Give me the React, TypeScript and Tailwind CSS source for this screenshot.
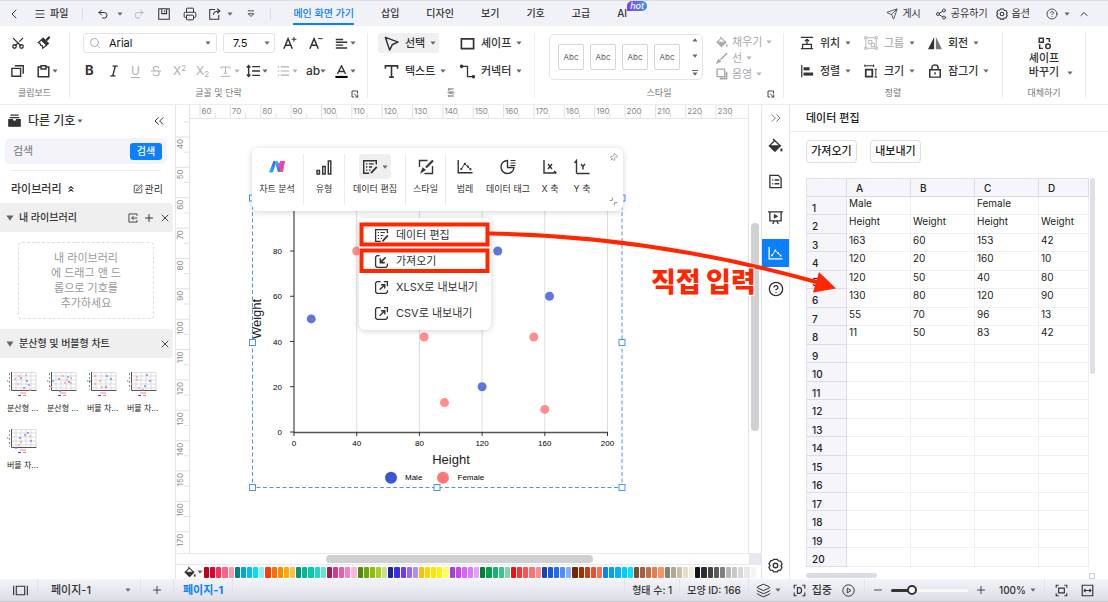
import React, { useState } from "react";
import { Search, Scissors, Printer, Undo2, Redo2, Send, Share2, CircleHelp, ChevronLeft, ChevronUp, ChevronsLeft, ChevronsRight, ChevronsUp, Layers, Plus, X, Minus, Menu, SquarePen, Pin } from "lucide-react";

type IconProps = { className?: string; children: React.ReactNode; sw?: number };

function Icon({ className = "size-4", children, sw = 1.4 }: IconProps) {
  return (
    <svg viewBox="0 0 16 16" fill="none" stroke="currentColor" strokeWidth={sw} className={`shrink-0 ${className}`} aria-hidden="true">
      {children}
    </svg>
  );
}

function Caret({ className = "" }: { className?: string }) {
  return (
    <svg viewBox="0 0 6 4" className={`h-1 w-[6px] shrink-0 fill-[#666] ${className}`} aria-hidden="true">
      <path d="M.5.5h5L3 3.7z" />
    </svg>
  );
}

function SectionCaret() {
  return (
    <svg viewBox="0 0 8 6" className="h-[6px] w-[8px] shrink-0 fill-[#666]" aria-hidden="true">
      <path d="M.5.5h7L4 5.700z" />
    </svg>
  );
}

const BucketIcon = ({ className }: { className?: string }) => (
  <Icon className={className}>
    <path d="M5.5 1l2 2M7 2.6L13 8.4 7.4 14 1.6 8.4z" />
    <path d="M2 8.4h10.8L7.4 13.8z" fill="currentColor" />
    <path d="M14.3 11.2v3" strokeWidth="2.2" />
  </Icon>
);

const EditDataIcon = ({ className }: { className?: string }) => (
  <Icon className={className}>
    <path d="M14.3 5.500V1.700H1.700v12.600h5.500" />
    <path d="M4 4.800h1.300M4 8h1.300M4 11.200h1.300M7 4.800h4.600M7 8h3M7 11.200h1.500" strokeWidth="1.300" />
    <path d="M9 14.200l5.800-6.400" strokeWidth="1.800" />
  </Icon>
);

const ImportIcon = ({ className }: { className?: string }) => (
  <Icon className={className}>
    <path d="M6 1.7H3.2L1.7 3.2v9.6l1.5 1.5h9.6l1.5-1.5V10" />
    <path d="M12.5 3.5L7 9M6.8 4.5V9.2h4.7" strokeWidth="1.7" />
  </Icon>
);

const ExportIcon = ({ className }: { className?: string }) => (
  <Icon className={className}>
    <path d="M7 1.700H3.200L1.700 3.200v9.600l1.500 1.500h9.600l1.500-1.500V11M10.500 1.700h3.800v5" />
    <path d="M6 10.500l5-5M7.500 5H11.500V9" strokeWidth="1.500" />
  </Icon>
);

const LegendIcon = ({ className }: { className?: string }) => (
  <Icon className={className}>
    <path d="M1.2 1v12.8H15.5" />
    <path d="M4.3 10l3.5-5.2 3 3.2 2.7 2" strokeWidth="1" />
    <path d="M3.4 10h1.8M6.9 4.8h1.8M10 7.5h1.8M12.6 10.2h1.8" strokeWidth="2" />
  </Icon>
);

const GearIcon = ({ className }: { className?: string }) => (
  <Icon className={className}>
    <path d="M5 2.6L6 1.4h4l1 1.6 2.4.2 1.6 3.4-1.2 1.7 1.2 1.7-1.8 3.2-2.3.1L10 14.8H6l-1-1.6-2.4-.2L1 9.8 2.2 8 1 6.2l1.8-3.2z" />
    <circle cx="8" cy="8" r="2.4" />
  </Icon>
);

const LauncherIcon = () => (
  <Icon className="size-2" sw={1.8}>
    <path d="M6 14H2V2h11v5M6 7l7 7M13.5 9v5.2H8.5" />
  </Icon>
);

const TABS = ["메인 화면 가기", "삽입", "디자인", "보기", "기호", "고급", "AI"];

function TitleBar() {
  const [tab, setTab] = useState(0);
  return (
    <header className="flex h-[26px] shrink-0 items-center border-t border-[#dcdde4] bg-[#f1f2f8] pl-[6px] pr-[18px] text-[10px]">
      <button aria-label="뒤로"><ChevronLeft className="size-4" strokeWidth={1.5} /></button>
      <button className="ml-3 flex items-center gap-1 font-medium"><Menu className="size-3" strokeWidth={1.8} />파일</button>
      <span className="ml-[14px] h-3 w-px bg-[#dcdde4]" />
      <button aria-label="실행 취소" className="ml-[14px] flex items-center gap-2"><Undo2 className="size-3" /><Caret /></button>
      <button aria-label="다시 실행" className="ml-[10px] text-[#b5b5bb]"><Redo2 className="size-3" /></button>
      <button aria-label="저장" className="ml-[13px]">
        <Icon className="size-3"><path d="M1 1h14v14H1zM5 1v6.5h6.5V1M9 3v2.5" /></Icon>
      </button>
      <button aria-label="인쇄" className="ml-[13px]"><Printer className="size-[14px]" strokeWidth={1.7} /></button>
      <button aria-label="내보내기" className="ml-3 flex items-center gap-[6px]">
        <Icon className="size-3"><path d="M8 2H1v13h12V9M6 9c0-3 3-5 8-5M11 1l3.5 3L11 7" /></Icon>
        <Caret />
      </button>
      <button aria-label="더 보기" className="ml-[13px]">
        <Icon className="size-[10px]"><path d="M3 3h10M3.5 7.5h9L8 12z" /></Icon>
      </button>
      <span className="ml-[14px] h-3 w-px bg-[#dcdde4]" />
      <nav className="ml-[22px] flex h-full gap-[27px] font-medium">
        {TABS.map((t, i) => (
          <button key={t} onClick={() => setTab(i)} className={`relative flex h-[24px] items-center border-b-2 pt-[2px] ${tab === i ? "border-[#0a80ff] text-[#0a80ff]" : "border-transparent"}`}>
            {t}
            {t === "AI" && <span className="absolute left-[10px] top-0 rounded-[5px] rounded-bl-none bg-gradient-to-r from-[#7a3cf5] to-[#2f8bff] px-[3px] text-[9px] italic leading-[10px] text-white">hot</span>}
          </button>
        ))}
      </nav>
      <div className="ml-auto flex items-center">
        <button className="flex items-center gap-1"><Send className="size-3" strokeWidth={1.6} />게시</button>
        <button className="ml-[14px] flex items-center gap-1"><Share2 className="size-3" strokeWidth={1.8} />공유하기</button>
        <button className="ml-2 flex items-center gap-1"><GearIcon className="size-3" />옵션</button>
        <button aria-label="도움말" className="ml-4 flex items-center gap-[6px]"><CircleHelp className="size-3" strokeWidth={1.7} /><Caret /></button>
        <button aria-label="접기" className="ml-2"><ChevronUp className="size-3" strokeWidth={2} /></button>
      </div>
    </header>
  );
}

function Group({ label, className = "", launcher, children }: { label: string; className?: string; launcher?: boolean; children: React.ReactNode }) {
  return (
    <section aria-label={label} className={`relative flex h-[65px] shrink-0 flex-col justify-between border-r border-[#ececef] ${className}`}>
      {children}
      <p className="text-center text-[9px] leading-[10px] text-[#777]">{label}</p>
      {launcher && <button aria-label={`${label} 설정`} className="absolute bottom-0 right-2"><LauncherIcon /></button>}
    </section>
  );
}

function ToolButton({ icon, label, className = "" }: { icon: React.ReactNode; label: string; className?: string }) {
  return (
    <button className={`flex h-5 items-center gap-[6px] text-[11px] ${className}`}>
      {icon}
      <span className="flex items-center gap-[5px]">{label}<Caret /></span>
    </button>
  );
}

const alignIcons = {
  position: <Icon className="size-[14px]"><path d="M1 1.500h14M1 14.500h14M3 14V9.500h10V14M8 10V4M5.500 6L8 3.800 10.500 6" /></Icon>,
  align: <Icon className="size-[14px]"><path d="M2 1v14" /><path d="M4 5.500h7" strokeWidth="3.500" /><path d="M4 11.500h11" strokeWidth="3.500" /></Icon>,
  group: <Icon className="size-[14px]"><path d="M3 2h10M3 14h10M2 3v10M14 3v10" strokeWidth="1" /><path d="M.8.8h2.400v2.400H.8zM12.800.8h2.400v2.400h-2.400zM.8 12.800h2.400v2.400H.8zM12.800 12.800h2.400v2.400h-2.400zM5 5h4v4H5zM8 8h4v4H8z" strokeWidth="1" /></Icon>,
  size: <Icon className="size-[14px]"><path d="M1 2h10M1 .5v3M11 .5v3" strokeWidth="1.200" /><path d="M2 6.500h7.500v8H2z" strokeWidth="2" /><path d="M13.500 6v9M12 6h3M12 15h3" strokeWidth="1.100" /></Icon>,
  rotate: <Icon className="size-[14px]" sw={0}><path d="M7 1v14H0z" fill="#333" /><path d="M9 1v14h7z" fill="#777" /></Icon>,
  lock: <Icon className="size-[14px]" sw={1.7}><path d="M2 6.500h12v8.500H2zM4.500 6.500V4c0-4 7-4 7 0v2.500M8 9.500v2.500" /></Icon>,
};

function Ribbon() {
  const [font, setFont] = useState("Arial");
  return (
    <div className="flex h-[79px] shrink-0 items-start overflow-hidden border-b border-[#ececef] bg-white pt-[7px]">
      <Group label="클립보드" className="w-[70px]">
        <div className="grid grid-cols-[26px_1fr] gap-y-2 pl-[11px]">
          <button aria-label="잘라내기" className="flex h-5 items-center"><Scissors className="size-[14px] -rotate-90" strokeWidth={2.2} /></button>
          <button aria-label="서식 복사" className="flex h-5 items-center">
            <Icon className="size-[14px]"><path d="M10.500 5L14.500 1" strokeWidth="2.500" /><path d="M7 2.500l6 6-2 2-6-6z" fill="currentColor" /><path d="M5 4.500L1.500 7.500l2 1 .5 2 2 .5.5 3L11 10.500" /></Icon>
          </button>
          <button aria-label="복사" className="flex h-5 items-center">
            <Icon className="size-[14px]" sw={1.6}><path d="M1 5h10v9H1z" /><path d="M4.500 2H14v9" /></Icon>
          </button>
          <button aria-label="붙여넣기" className="flex h-5 items-center gap-[2px]">
            <Icon className="size-[13px]" sw={1.8}><path d="M5 2.500H1.500v12h13v-12H11M5 1h6v4H5z" /></Icon><Caret />
          </button>
        </div>
      </Group>
      <Group label="글꼴 및 단락" className="w-[298px]" launcher>
        <div className="flex flex-col gap-2 pl-[13px]">
          <div className="flex h-5 items-center">
            <label className="flex h-5 w-[134px] items-center rounded-[3px] border border-[#e2e2e6] px-[5px]">
              <Search className="size-3 text-[#999]" strokeWidth={1.6} />
              <input aria-label="글꼴" value={font} onChange={(e) => setFont(e.target.value)} className="ml-2 min-w-0 flex-1 bg-transparent text-[11px] text-[#111] outline-none" />
              <Caret />
            </label>
            <label className="ml-[6px] flex h-5 w-[52px] items-center rounded-[3px] border border-[#e2e2e6] pl-[9px] pr-1">
              <select aria-label="글꼴 크기" className="min-w-0 flex-1 appearance-none bg-transparent text-[11px] text-[#111] outline-none"><option>7.5</option></select>
              <Caret />
            </label>
            <button aria-label="글꼴 크게" className="ml-2"><Icon className="size-[14px]"><path d="M1 14.500L5.800 3 10.600 14.500M2.700 10.500h6.200" strokeWidth="1.700" /><path d="M12.500 1v5.500M9.800 3.700h5.500" strokeWidth="1.200" /></Icon></button>
            <button aria-label="글꼴 작게" className="ml-3"><Icon className="size-[14px]"><path d="M1 14.500L5.800 3 10.600 14.500M2.700 10.500h6.200" strokeWidth="1.700" /><path d="M10.500 3h5" strokeWidth="1.200" /></Icon></button>
            <button aria-label="맞춤" className="ml-3 flex items-center gap-[2px]"><Icon className="size-[13px]" sw={1.8}><path d="M1 3h9M1 6.500h14M1 10h9M1 13.500h14" /></Icon><Caret /></button>
          </div>
          <div className="flex h-5 items-center">
            <button aria-label="굵게" className="w-[22px] pl-[2px] text-left text-[13px] font-bold">B</button>
            <button aria-label="기울임" className="flex w-[24px] items-center pl-[3px]"><Icon className="size-3" sw={1.9}><path d="M6 1.500h7M3 14.500h7M9.700 1.500l-3.400 13" /></Icon></button>
            <button aria-label="밑줄" className="w-[21px] pl-[2px] text-left text-[12px] text-[#b0b0b0] underline underline-offset-2">U</button>
            <button aria-label="취소선" className="w-[23px] text-left text-[#b0b0b0]"><Icon className="size-3"><path d="M1 8h14M12 4.500C11 1 4.500 1 4.500 4.700 4.500 6 5.500 7 7 7.500M4 11.500c1 4 8.500 3.500 8.300-.5 0-1-.5-2-1.300-2.500" /></Icon></button>
            <button aria-label="위 첨자" className="w-[23px] text-left text-[12px] text-[#b0b0b0]">X<sup className="text-[8px]">2</sup></button>
            <button aria-label="아래 첨자" className="w-[24px] text-left text-[12px] text-[#b0b0b0]">X<sub className="text-[8px]">2</sub></button>
            <button aria-label="텍스트 효과" className="flex w-[26px] items-center gap-[3px] text-[#b0b0b0]"><Icon className="size-[11px]"><path d="M1.500 4V1.500h13V4M8 1.500v9M5.500 10.500h5M1 15h14" /></Icon><Caret className="opacity-50" /></button>
            <button aria-label="줄 간격" className="flex w-[31px] items-center gap-[2px]"><Icon className="size-[14px]" sw={1.6}><path d="M3 2v12M1 4l2-2.200L5 4M1 12l2 2.200L5 12M7 3h9M7 8h9M7 13h9" /></Icon><Caret /></button>
            <button aria-label="글머리 기호" className="flex w-[29px] items-center gap-[3px] text-[#b0b0b0]"><Icon className="size-3"><path d="M1 2.500h2M1 8h2M1 13.500h2M5 2.500h11M5 8h11M5 13.500h11" /></Icon><Caret className="opacity-50" /></button>
            <button aria-label="대소문자" className="flex w-[29px] items-center text-[12px] font-medium">ab<Caret /></button>
            <button aria-label="글꼴 색" className="flex items-center gap-[2px]"><Icon className="size-[13px]"><path d="M3 11L8 1l5 10M4.700 8h6.600" strokeWidth="1.700" /><path d="M.5 14.700h15" stroke="#000" strokeWidth="2.600" /></Icon><Caret /></button>
          </div>
        </div>
      </Group>
      <Group label="툴" className="w-[167px]">
        <div className="grid grid-cols-[82px_1fr] gap-y-2 pl-[10px] font-medium">
          <ToolButton label="선택" className="mr-auto rounded-[3px] bg-[#f0f0f2] pl-[6px] pr-[3px]" icon={<Icon className="size-[15px]" sw={1.600}><path d="M1.500 1.500L15 6.500 9 9 6 15z" strokeLinejoin="round" /></Icon>} />
          <ToolButton label="셰이프" icon={<Icon className="size-[15px]" sw={1.800}><path d="M1.500 3h13v10.500h-13z" /></Icon>} />
          <ToolButton label="텍스트" className="pl-[6px]" icon={<Icon className="size-[15px]" sw={1.700}><path d="M1.500 5V2h13v3M8 2v12M5.500 14h5" /></Icon>} />
          <ToolButton label="커넥터" icon={<Icon className="size-[15px]"><path d="M2 2.500h6v11h6" /><circle cx="1.700" cy="2.500" r="1.200" fill="currentColor" /><circle cx="14.300" cy="13.500" r="1.200" fill="currentColor" /></Icon>} />
        </div>
      </Group>
      <Group label="스타일" className="w-[249px]" launcher>
        <div className="flex pl-[14px] pt-px">
          <div className="flex h-[46px] w-[154px] items-center rounded-[5px] border border-[#e4e4e8] pl-2">
            <div className="flex gap-[6px]">
              {[0, 1, 2, 3].map((n) => (
                <button key={n} className="size-[26px] rounded-[2px] border border-[#d6d6da] text-[8px] text-[#666]">Abc</button>
              ))}
            </div>
            <div className="ml-3 flex flex-col items-center gap-3">
              <button aria-label="이전 스타일" className="flex"><Caret className="rotate-180" /></button>
              <button aria-label="다음 스타일" className="flex"><Caret /></button>
              <button aria-label="모든 스타일" className="flex border-t border-[#666] pt-px"><Caret /></button>
            </div>
          </div>
          <div className="ml-[13px] flex flex-col text-[11px] leading-4 text-[#a8a8ad]">
            <button className="flex items-center gap-1"><BucketIcon className="size-3" />채우기<Caret className="opacity-50" /></button>
            <button className="flex items-center gap-1"><Icon className="size-3"><path d="M1.500 14.500l2-4L5.500 12.500zM6 10L15 1.500" strokeWidth="2" /></Icon>선<Caret className="opacity-50" /></button>
            <button className="flex items-center gap-1"><Icon className="size-3" sw={1.800}><path d="M1.500 1.500h10v10h-10z" /><path d="M14 5v9H5" strokeWidth="2.500" /></Icon>음영<Caret className="opacity-50" /></button>
          </div>
        </div>
      </Group>
      <Group label="정렬" className="w-[219px]">
        <div className="grid grid-cols-[64px_64px_1fr] gap-y-2 pl-4 font-medium">
          <ToolButton label="위치" icon={alignIcons.position} />
          <ToolButton label="그룹" icon={alignIcons.group} className="text-[#b0b0b5]" />
          <ToolButton label="회전" icon={alignIcons.rotate} />
          <ToolButton label="정렬" icon={alignIcons.align} />
          <ToolButton label="크기" icon={alignIcons.size} />
          <ToolButton label="잠그기" icon={alignIcons.lock} />
        </div>
      </Group>
      <Group label="대체하기" className="w-[83px]">
        <button className="relative mt-1 flex flex-col items-center text-[11px] font-medium leading-[14px]">
          <Icon className="mb-px size-[13px]" sw={1.800}><path d="M1.500 1.500h5v5h-5zM9.500 11.500a2.800 2.800 0 1 0 5.600 0 2.800 2.800 0 1 0-5.600 0M2 9v5h4M10 2h4v4" /></Icon>
          셰이프<br />바꾸기
          <Caret className="absolute bottom-1 right-3" />
        </button>
      </Group>
    </div>
  );
}

const THUMBS = [
  { label: "분산형 ...", blue: [[14, 6], [20, 9], [22, 13], [17, 16]], red: [[8, 7], [12, 4], [11, 12], [19, 3], [23, 18]] },
  { label: "분산형 ...", blue: [[6, 9], [12, 7], [21, 5], [13, 19], [22, 10]], red: [[4, 15], [16, 4], [20, 8], [24, 6], [24, 11], [18, 11]] },
  { label: "버블 차...", blue: [[3, 9], [20, 4], [24, 7], [19, 15]], red: [[8, 4], [13, 9], [8, 12], [15, 15]] },
  { label: "버블 차...", blue: [[20, 3], [23, 9], [18, 14], [16, 18]], red: [[10, 5], [10, 8], [5, 12], [12, 16]] },
  { label: "버블 차...", blue: [[13, 9], [18, 6], [21, 4], [24, 12], [9, 19]], red: [[14, 13], [23, 7], [12, 16]] },
];

function Sidebar() {
  return (
    <aside className="flex w-44 shrink-0 flex-col border-r border-[#e4e4ea] bg-white">
      <div className="flex h-[31px] items-center px-2">
        <Icon className="size-[13px]" sw={1.500}><path d="M3 1.500h10M2 4.500h12" /><path d="M1 7h4.500l1 2h3l1-2H15v8H1z" fill="currentColor" /></Icon>
        <button className="ml-[7px] flex items-center gap-[2px] text-xs font-medium">다른 기호<Caret /></button>
        <button aria-label="패널 접기" className="ml-auto"><ChevronsLeft className="size-4" strokeWidth={1.500} /></button>
      </div>
      <form className="ml-[5px] mr-2 mt-[2px] flex h-[26px] items-center rounded-[5px] bg-[#f3f3f9] pl-2 pr-[5px]" onSubmit={(e) => e.preventDefault()}>
        <input aria-label="검색" placeholder="검색" className="min-w-0 flex-1 bg-transparent text-[11px] outline-none placeholder:text-[#777]" />
        <button className="h-[17px] w-8 rounded-[3px] bg-[#0a80ff] text-[10px] font-medium text-white">검색</button>
      </form>
      <hr className="ml-[11px] mr-[14px] mt-[6px] border-[#ececf0]" />
      <div className="flex h-8 items-center pl-[11px] pr-3 pt-1">
        <button className="flex items-center gap-1 text-[11px] font-medium">라이브러리<ChevronsUp className="size-[10px]" strokeWidth={2.500} /></button>
        <button className="ml-auto flex items-center gap-[2px] text-[10px]"><SquarePen className="size-[10px]" />관리</button>
      </div>
      <div className="mr-[2px] flex h-[29px] items-center rounded-r-[4px] bg-[#efefef] pl-[6px] pr-[2px]">
        <SectionCaret />
        <h2 className="ml-[5px] text-[10px] font-medium">내 라이브러리</h2>
        <button aria-label="가져오기" className="ml-auto"><Icon className="size-[10px]"><path d="M14.500 4.500V1.500h-13v13h13v-3M15 8H6M9 4.800L5.800 8 9 11.200" /></Icon></button>
        <button aria-label="추가" className="ml-[5px]"><Plus className="size-3" /></button>
        <button aria-label="닫기" className="ml-1"><X className="size-3" strokeWidth={1.800} /></button>
      </div>
      <div className="ml-[18px] mr-[21px] mt-[10px] flex h-[77px] items-center justify-center rounded-[4px] border border-dashed border-[#dedee2]">
        <p className="w-[72px] text-center text-[11px] leading-[15px] text-[#999]">내 라이브러리에 드래그 앤 드롭으로 기호를 추가하세요</p>
      </div>
      <div className="mr-[2px] mt-[10px] flex h-[29px] items-center rounded-r-[4px] bg-[#efefef] pl-[6px] pr-[2px]">
        <SectionCaret />
        <h2 className="ml-[5px] text-[10px] font-medium">분산형 및 버블형 차트</h2>
        <button aria-label="닫기" className="ml-auto"><X className="size-3" strokeWidth={1.800} /></button>
      </div>
      <ul className="grid grid-cols-[repeat(4,40px)] gap-y-[15px] pl-[7px] pt-[14px]">
        {THUMBS.map((t, i) => (
          <li key={i} className="w-8">
            <svg viewBox="0 0 30 25" className="h-[25px] w-[30px]">
              <path d="M4 .5h25M4 4h25M4 8h25M4 12h25M4 16h25M9 1v17M14 1v17M19 1v17M24 1v17M29 1v17" stroke="#cfcfd6" strokeWidth=".7" />
              <path d="M4.500 0v18.500H29.500" fill="none" stroke="#555" strokeWidth="1" />
              <path d="M.8 8v4M2.500 1v17" stroke="#777" strokeWidth=".8" strokeDasharray="2 2" />
              <path d="M11 23.500h3" stroke="#3b56d0" strokeWidth="1.200" /><path d="M16 23.500h3M13 21h6" stroke="#f77" strokeWidth=".9" />
              {t.blue.map(([x, y], k) => <circle key={k} cx={x} cy={y} r=".9" fill="#6d82f0" />)}
              {t.red.map(([x, y], k) => <circle key={k} cx={x} cy={y} r=".9" fill="#ff9a9a" />)}
            </svg>
            <p className="mt-[5px] whitespace-nowrap text-[8px] leading-3 text-[#222]">{t.label}</p>
          </li>
        ))}
      </ul>
    </aside>
  );
}

const STEP = 30.36;

function TopRuler() {
  return (
    <svg className="block h-[14px] w-full border-b border-[#e4e4ea]" aria-hidden="true">
      {Array.from({ length: 18 }, (_, i) => {
        const x = 10 + i * STEP;
        return (
          <g key={i}>
            <path d={`M${x} 0v14M${x + STEP / 2} 8v6`} stroke="#e0e0e8" />
            <text x={x + 1.5} y="9" fontSize="8" fill="#888">{60 + i * 10}</text>
          </g>
        );
      })}
    </svg>
  );
}

function LeftRuler() {
  return (
    <svg className="block h-full w-[14px] shrink-0 border-r border-[#e4e4ea]" aria-hidden="true">
      {Array.from({ length: 14 }, (_, i) => {
        const y = 32 + i * STEP;
        return (
          <g key={i}>
            <path d={`M0 ${y}h14M8 ${y - STEP / 2}h6`} stroke="#e0e0e8" />
            <text transform={`translate(7 ${y + 2}) rotate(-90)`} textAnchor="end" fontSize="8" fill="#888">{40 + i * 10}</text>
          </g>
        );
      })}
    </svg>
  );
}

const MALE = [[163, 60], [120, 20], [120, 50], [130, 80], [55, 70], [11, 50]];
const FEMALE = [[153, 42], [160, 10], [40, 80], [120, 90], [96, 13], [83, 42]];
const px = (v: number) => 294 + v * 1.5675;
const py = (v: number) => 432 - v * 2.262;

function ScatterChart() {
  const handles = [[252.5, 198], [622, 198], [252.5, 342.500], [622, 342.500], [252.5, 487.500], [437, 487.500], [622, 487.500]];
  return (
    <svg viewBox="246 193 382 300" className="absolute left-[56px] top-[74px] h-[300px] w-[382px] font-['Liberation_Sans']">
      {[40, 80, 120, 160, 200].map((v) => <path key={v} d={`M${px(v)} 205V432`} stroke="#dedede" />)}
      <path d="M294 205V432.500H607.500" fill="none" stroke="#555" strokeWidth="1.300" />
      {[0, 40, 80, 120, 160, 200].map((v) => (
        <g key={v}>
          <path d={`M${px(v)} 432v4`} stroke="#333" />
          <text x={px(v)} y="446" fontSize="8" textAnchor="middle">{v}</text>
        </g>
      ))}
      {[0, 20, 40, 60, 80].map((v) => (
        <g key={v}>
          <path d={`M290 ${py(v)}h4`} stroke="#333" />
          <text x="282" y={py(v) + 3} fontSize="8" textAnchor="end">{v}</text>
        </g>
      ))}
      {MALE.map(([x, y], i) => <circle key={i} cx={px(x)} cy={py(y)} r="4.500" fill="#6076d8" />)}
      {FEMALE.map(([x, y], i) => <circle key={i} cx={px(x)} cy={py(y)} r="4.500" fill="#ff8e8e" />)}
      <text x="451" y="464" fontSize="13" textAnchor="middle" fill="#222">Height</text>
      <text transform="translate(261 319) rotate(-90)" fontSize="13" textAnchor="middle" fill="#222">Weight</text>
      <circle cx="391" cy="477.700" r="6" fill="#3b56d0" />
      <text x="405" y="480" fontSize="8">Male</text>
      <circle cx="443" cy="477.700" r="6" fill="#ff7676" />
      <text x="457.500" y="480" fontSize="8">Female</text>
      <path d="M252.500 198H622V487.500H252.500z" fill="none" stroke="#4a94f5" strokeDasharray="4 2.500" />
      {handles.map(([x, y], i) => <rect key={i} x={x - 3} y={y - 3} width="6" height="6" fill="#fff" stroke="#4a94f5" />)}
    </svg>
  );
}

function FloatItem({ label, children, className = "" }: { label: string; children: React.ReactNode; className?: string }) {
  return (
    <button className={`flex flex-col items-center gap-1 whitespace-nowrap text-[9px] leading-3 ${className}`}>
      <span className="flex h-[25px] items-center justify-center">{children}</span>
      {label}
    </button>
  );
}

const MENU = [
  { label: "데이터 편집", icon: <EditDataIcon className="size-[15px]" /> },
  { label: "가져오기", icon: <ImportIcon className="size-[15px]" /> },
  { label: "XLSX로 내보내기", icon: <ExportIcon className="size-[15px]" /> },
  { label: "CSV로 내보내기", icon: <ExportIcon className="size-[15px]" /> },
];

function ChartToolbar() {
  const divider = <span className="h-[51px] w-px bg-[#ececf0]" />;
  return (
    <div className="absolute left-[62px] top-[29px] flex h-[63px] w-[371px] items-start rounded-[6px] bg-white pl-[5px] pt-[6px] shadow-[0_1px_6px_rgba(0,0,0,0.18)]">
      <FloatItem label="차트 분석" className="mr-[6px] w-10">
        <svg viewBox="0 0 16 13" className="h-[13px] w-4">
          <defs>
            <linearGradient id="logoLeg" x1="0" y1="1" x2="0" y2="0"><stop offset="0" stopColor="#18b8f8" /><stop offset="1" stopColor="#4a4ff5" /></linearGradient>
            <linearGradient id="logoBar" x1="0" y1="0" x2="0" y2="1"><stop offset="0" stopColor="#20d0f8" /><stop offset="1" stopColor="#3b5cff" /></linearGradient>
            <linearGradient id="logoEnd" x1="0" y1="0" x2="0" y2="1"><stop offset="0" stopColor="#ff35b0" /><stop offset="1" stopColor="#ff5068" /></linearGradient>
          </defs>
          <path d="M0 12.500L4.500 1h3L4 12.500z" fill="url(#logoLeg)" />
          <path d="M10.500 12L13.500 1H16L14 12z" fill="url(#logoEnd)" />
          <path d="M5.500 1h3l4 6-2 5H9z" fill="url(#logoBar)" />
          <path d="M8.500 6l3-5H16l-4 8z" fill="#ee3fc0" />
        </svg>
      </FloatItem>
      {divider}
      <FloatItem label="유형" className="w-10">
        <Icon sw={1.400}><path d="M1 11.500h2.500V15H1zM6.700 7.500h2.500V15H6.700zM12.300 2h2.500v13h-2.500z" /></Icon>
      </FloatItem>
      {divider}
      <FloatItem label="데이터 편집" className="w-[60px]">
        <span className="flex h-[25px] w-8 items-center justify-center gap-1 rounded-[4px] bg-[#efefef]"><EditDataIcon className="size-4" /><Caret /></span>
      </FloatItem>
      {divider}
      <FloatItem label="스타일" className="w-[39px]">
        <Icon><path d="M9.500 1.500H1.500V8M6.500 14.500H14.500V7" /><path d="M3.500 13l1.500-3.500 1.800 1.500z" fill="currentColor" /><path d="M8 8.500L15 1.500" strokeWidth="2.200" /></Icon>
      </FloatItem>
      {divider}
      <FloatItem label="범레" className="w-[38px]"><LegendIcon /></FloatItem>
      <FloatItem label="데이터 태그" className="w-[48px]">
        <Icon><path d="M7.500 1.500a6.500 6.500 0 1 0 6.500 7H7.500z" /><path d="M10.500 1.500h5M10.500 4h5M10.500 6.500h5" strokeWidth="1.100" /></Icon>
      </FloatItem>
      <FloatItem label="X 축" className="w-9">
        <Icon><path d="M2 1v13H14M12 12l2.500 2" /><path d="M6 5l4 5M10 5l-4 5" /></Icon>
      </FloatItem>
      <FloatItem label="Y 축" className="w-7">
        <Icon><path d="M2.500 14.500V1.500L.5 4M2.500 14.500h13" /><path d="M7 5l2 2.500L11 5M9 7.500V10.500" /></Icon>
      </FloatItem>
      <button aria-label="고정" className="absolute right-[5px] top-[5px] text-[#888]"><Pin className="size-[9px] rotate-45" /></button>
      <button aria-label="축소" className="absolute bottom-[5px] right-[5px] text-[#888]"><Icon className="size-[9px]" sw={1.600}><path d="M1 6h5V1M10 15v-5h5" /></Icon></button>

      <ul className="absolute left-[107px] top-[70px] w-[132px] rounded-[6px] bg-white py-1 shadow-[0_1px_6px_rgba(0,0,0,0.18)]">
        {MENU.map((m) => (
          <li key={m.label}>
            <button className="flex h-[26px] w-full items-center gap-[7px] whitespace-nowrap pl-[15px] text-[11px]">{m.icon}{m.label}</button>
          </li>
        ))}
      </ul>
    </div>
  );
}

const PALETTE = [
  "#c00015", "#e0002b", "#ff2d5b", "#ff6083", "#ff96ab", "#00828c", "#00abc8", "#00c3e6", "#00e0f5", "#8aeefb",
  "#ff3d00", "#ff6f00", "#ff8c00", "#ffab00", "#ffc23d", "#00997a", "#00b894", "#00ccaa", "#1fd8c0", "#5ee6d2",
  "#a8175f", "#d23c8a", "#ef5aab", "#ff7cc4", "#fbb8dc", "#4f8a00", "#6ba800", "#8cc000", "#a8d020", "#cfe08a",
  "#1e22aa", "#3a2fe0", "#6a3cff", "#9966ff", "#b28cff", "#ffc000", "#ffd400", "#ffe600", "#fff200", "#fdff5e",
  "#a340e0", "#d042ee", "#e060ff", "#d87cff", "#e8a0ff", "#008037", "#00a04a", "#14b070", "#3cc488", "#78d8a8",
  "#ff0a14", "#ff3333", "#ff5252", "#ff7070", "#ff8a8a", "#1544b0", "#1558e0", "#1a6bff", "#4f8cff", "#7fb0ff",
  "#7a2400", "#a03000", "#c83c18", "#e85030", "#ff6e50", "#008ae6", "#00a0f0", "#00b4ff", "#00ccff", "#00e5ff",
  "#7d4b32", "#a3603f", "#c47048", "#e08050", "#ff9160", "#8c8070", "#b0a890", "#c8bfa8", "#e5dccb", "#f2ecd8",
  "#141414", "#2d2d2d", "#444444", "#5c5c5c", "#808080", "#b8b8b8", "#c8c8c8", "#d8d8d8", "#e8e8e8", "#f4f4f4",
];

function Workspace() {
  return (
    <main className="flex min-w-0 flex-1 flex-col bg-white">
      <div className="flex min-h-0 flex-1">
        <LeftRuler />
        <div className="flex min-w-0 flex-1 flex-col">
          <TopRuler />
          <div className="relative min-h-0 flex-1">
            <ScatterChart />
            <ChartToolbar />
          </div>
        </div>
        <div className="w-[13px] shrink-0 border-l border-[#e4e4ea] px-[2px] pt-[118px]">
          <div className="h-[208px] rounded-full bg-[#cfd0d2]" />
        </div>
      </div>
      <div className="flex h-3 shrink-0 border-y border-[#e8e8ec]">
        <div className="flex-1 py-px pl-[150px]"><div className="h-2 w-[267px] rounded-full bg-[#cfd0d2]" /></div>
        <div className="w-3 bg-[#e6e7f0]" />
      </div>
      <div className="flex h-[14px] shrink-0 items-center pl-2 pr-[6px]">
        <button aria-label="채우기 색" className="flex w-5 items-center gap-px"><BucketIcon className="size-3" /><Caret /></button>
        <div className="flex h-[11px] flex-1 gap-px">
          {PALETTE.map((c) => <button key={c} aria-label={c} className="min-w-0 flex-1 rounded-[1px]" style={{ backgroundColor: c }} />)}
        </div>
      </div>
    </main>
  );
}

const RAIL = [
  { label: "채우기", icon: <BucketIcon className="size-[15px]" /> },
  { label: "속성", icon: <Icon className="size-[15px]"><path d="M2 1.500h9l3 3v10H2z" /><path d="M4.500 6.500h1M7 6.500h5M4.500 10.500h1M7 10.500h5" strokeWidth="1.600" /></Icon> },
  { label: "프레젠테이션", icon: <Icon className="size-[15px]"><path d="M0 2h16M2 2v9.500h12V2M5 15l1.500-3M11 15l-1.500-3" /><path d="M6.500 4.500v4.500L10.500 6.700z" fill="currentColor" strokeWidth=".5" /></Icon> },
  { label: "차트", icon: <LegendIcon className="size-[15px]" /> },
  { label: "도움말", icon: <CircleHelp className="size-4" /> },
];

function Rail() {
  const [active, setActive] = useState(3);
  return (
    <nav className="flex w-[29px] shrink-0 flex-col border-l border-r border-[#e4e4ea] bg-white">
      <button aria-label="패널 닫기" className="flex h-[26px] items-center justify-center text-[#777]"><ChevronsRight className="size-4" strokeWidth={1.500} /></button>
      <div className="flex flex-col gap-2">
        {RAIL.map((r, i) => (
          <button key={r.label} aria-label={r.label} onClick={() => setActive(i)} className={`flex h-7 items-center justify-center ${active === i ? "bg-[#0a80ff] text-white" : ""}`}>{r.icon}</button>
        ))}
      </div>
      <button aria-label="설정" className="mb-[6px] mt-auto flex justify-center"><GearIcon className="size-[15px]" /></button>
    </nav>
  );
}

const ROWS = [
  ["Male", "", "Female", ""],
  ["Height", "Weight", "Height", "Weight"],
  ["163", "60", "153", "42"],
  ["120", "20", "160", "10"],
  ["120", "50", "40", "80"],
  ["130", "80", "120", "90"],
  ["55", "70", "96", "13"],
  ["11", "50", "83", "42"],
];

function DataPanel() {
  return (
    <aside className="flex w-[318px] shrink-0 flex-col overflow-hidden bg-white text-[#222]">
      <h2 className="h-[27px] shrink-0 border-b border-[#ececf0] pl-4 text-[11px] font-medium leading-[26px]">데이터 편집</h2>
      <div className="flex gap-[13px] pl-4 pt-2 text-[11px] font-medium">
        <button className="h-[23px] w-[51px] rounded-[4px] border border-[#dedee2]">가져오기</button>
        <button className="h-[23px] w-[51px] rounded-[4px] border border-[#dedee2]">내보내기</button>
      </div>
      <div className="ml-4 mr-[13px] mt-[15px] flex min-h-0 flex-1 gap-px">
        <div className="min-w-0 flex-1 overflow-hidden">
          <table className="w-full table-fixed border-separate border-spacing-0 border-l border-t border-[#e2e2ea] text-[10px] leading-3">
            <colgroup><col className="w-10" /><col className="w-16" /><col className="w-16" /><col className="w-16" /><col /></colgroup>
            <thead>
              <tr className="h-[18px] bg-[#f5f5fa]">
                <th className="border-b border-r border-[#dcdce4]" />
                {["A", "B", "C", "D"].map((c) => (
                  <th key={c} scope="col" className="border-b border-r border-[#dcdce4] p-0 pl-[9px] pt-px text-left font-medium">{c}</th>
                ))}
              </tr>
            </thead>
            <tbody>
              {Array.from({ length: 20 }, (_, r) => (
                <tr key={r} className="odd:h-[18px] even:h-[19px]">
                  <th scope="row" className="border-b border-r border-[#dcdce4] bg-[#f5f5fa] p-0 pl-[5px] pt-1 text-left font-medium">{r + 1}</th>
                  {[0, 1, 2, 3].map((c) => (
                    <td key={c} className="border-b border-r border-[#efeff3] p-0 pl-[2px] align-top">{ROWS[r]?.[c]}</td>
                  ))}
                </tr>
              ))}
            </tbody>
          </table>
        </div>
        <div className="h-[196px] w-[5px] rounded-full bg-[#dfdfe6]" />
      </div>
      <div className="ml-4 mr-[13px] flex h-[6px] shrink-0 items-start justify-between">
        <div className="h-[5px] w-[71px] rounded-full bg-[#dcdce4]" />
        <div className="size-[6px] border border-[#ccc]" />
      </div>
    </aside>
  );
}

function Annotations() {
  return (
    <svg viewBox="355 215 485 90" className="pointer-events-none absolute left-[355px] top-[110px] h-[90px] w-[485px]">
      <rect x="361.500" y="224.500" width="126" height="20" fill="none" stroke="#ff2600" strokeWidth="4" />
      <rect x="361.500" y="250.500" width="126" height="20.500" fill="none" stroke="#ff2600" strokeWidth="4" />
      <path d="M489 233.500C600 235 710 252 820 283" fill="none" stroke="#ff2600" strokeWidth="4" />
      <path d="M819 272L836 288.500 813 292.500z" fill="#ff2600" />
      <text x="651" y="292" fontSize="27" fontWeight="900" fill="#ff2600" stroke="#fff" strokeWidth="2" paintOrder="stroke">직접 입력</text>
    </svg>
  );
}

function StatusBar() {
  const [zoom, setZoom] = useState(24);
  const divider = <span className="h-full w-px shrink-0 bg-[#dfe0e8]" />;
  return (
    <footer className="flex h-[23px] shrink-0 items-center border-b border-[#c4c5cc] bg-gradient-to-b from-[#f3f4f9] to-[#dcdee6] text-[10px] font-medium">
      <button aria-label="개요" className="pl-[13px] pr-[9px]"><Icon className="size-[15px]" sw={1.2}><path d="M3.500 3.500h9v9h-9zM.7 3v10M15.300 3v10" /></Icon></button>
      {divider}
      <label className="flex w-[102px] items-center pl-[13px] pr-[9px]">
        <select aria-label="페이지" className="min-w-0 flex-1 appearance-none bg-transparent text-[11px] outline-none"><option>페이지-1</option></select>
        <Caret />
      </label>
      {divider}
      <button aria-label="페이지 추가" className="px-[10px]"><Plus className="size-3" strokeWidth={1.800} /></button>
      {divider}
      <button className="px-[9px] text-[11px] font-bold text-[#0a80ff]">페이지-1</button>
      {divider}
      <div className="ml-auto flex h-full items-center">
        {divider}
        <span className="px-[7px]">형태 수: 1</span>
        {divider}
        <span className="px-[7px]">모양 ID: 166</span>
        {divider}
        <button aria-label="레이어" className="ml-[7px] flex items-center gap-1"><Layers className="size-[15px]" strokeWidth={1.600} /><Caret /></button>
        <button className="ml-3 flex items-center gap-[6px] text-[11px]">
          <Icon className="size-[13px]"><path d="M4.500 1.500h-3v4M1.500 10.500v4h3M11.500 1.500h3v4M14.500 10.500v4h-3M5.500 4.500h2c4 0 4 7 0 7h-2z" /></Icon>집중
        </button>
        <button aria-label="재생" className="ml-[10px] mr-[9px]"><Icon className="size-[13px]" sw={1.2}><circle cx="8" cy="8" r="7" /><path d="M6.500 5v6L11 8z" /></Icon></button>
        {divider}
        <button aria-label="축소" className="ml-[7px]"><Minus className="size-3" strokeWidth={1.800} /></button>
        <input type="range" aria-label="확대/축소" value={zoom} onChange={(e) => setZoom(Number(e.target.value))} className="ml-[7px] h-[3px] w-[77px] appearance-none rounded-full bg-[linear-gradient(to_right,#333_25%,#f8f8fa_25%)] [&::-webkit-slider-thumb]:size-[10px] [&::-webkit-slider-thumb]:appearance-none [&::-webkit-slider-thumb]:rounded-full [&::-webkit-slider-thumb]:border-2 [&::-webkit-slider-thumb]:border-[#333] [&::-webkit-slider-thumb]:bg-white" />
        <button aria-label="확대" className="ml-[7px]"><Plus className="size-3" strokeWidth={1.800} /></button>
        <label className="ml-3 mr-2 flex items-center gap-1">
          <select aria-label="배율" className="appearance-none bg-transparent outline-none"><option>100%</option></select>
          <Caret />
        </label>
        {divider}
        <button aria-label="창에 맞춤" className="ml-[10px]"><Icon className="size-[13px]"><path d="M4.500 1.500h-3v3M1.500 11.500v3h3M11.500 1.500h3v3M14.500 11.500v3h-3M4.500 5h7v6h-7z" /></Icon></button>
        <button aria-label="너비에 맞춤" className="ml-[13px] mr-[14px]"><Icon className="size-[13px]"><path d="M1.500 1.500h13v13h-13zM4 8h8M5.500 6L3.800 8l1.700 2M10.500 6l1.700 2-1.700 2" /></Icon></button>
      </div>
    </footer>
  );
}

export default function App() {
  return (
    <div className="flex h-screen flex-col overflow-hidden bg-white font-[Inter,'Noto_Sans_CJK_KR',sans-serif] text-[#333]">
      <TitleBar />
      <Ribbon />
      <div className="relative flex min-h-0 flex-1">
        <Sidebar />
        <Workspace />
        <Rail />
        <DataPanel />
        <Annotations />
      </div>
      <StatusBar />
    </div>
  );
}
